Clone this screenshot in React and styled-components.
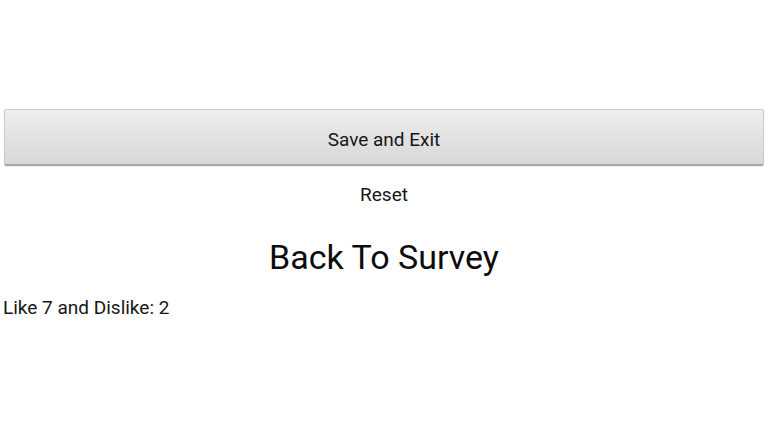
import React from 'react';
import styled, { createGlobalStyle } from 'styled-components';

const GlobalStyle = createGlobalStyle`
  html, body {
    margin: 0;
    padding: 0;
    background: #ffffff;
  }
  body {
    font-family: Roboto, "Noto Sans", sans-serif;
    color: #111111;
  }
`;

const Screen = styled.div`
  width: 768px;
  height: 432px;
  display: flex;
  flex-direction: column;
  padding-top: 109px;
  box-sizing: border-box;
`;

const BigButton = styled.button`
  margin: 0 4px;
  height: 57px;
  border: 1px solid #c9c9c9;
  border-bottom: 2px solid #a9a9a9;
  border-radius: 2px;
  background: linear-gradient(to bottom, #eeeeee 0%, #e2e2e2 50%, #d8d8d8 100%);
  font-family: Roboto, sans-serif;
  font-size: 19px;
  color: #161616;
  padding: 5px 0 0;
  box-shadow: 0 1px 1px rgba(0, 0, 0, 0.08);
`;

const TextButton = styled.div`
  align-self: center;
  margin-top: 17px;
  font-size: 19px;
  line-height: 24px;
  color: #161616;
`;

const Title = styled.div`
  align-self: center;
  margin-top: 29px;
  font-size: 34px;
  line-height: 42px;
  color: #0c0c0c;
`;

const Counts = styled.div`
  margin-top: 18px;
  padding-left: 3px;
  font-size: 19px;
  line-height: 24px;
  color: #161616;
`;

const App = () => (
  <>
    <GlobalStyle />
    <Screen>
      <BigButton>Save and Exit</BigButton>
      <TextButton>Reset</TextButton>
      <Title>Back To Survey</Title>
      <Counts>Like 7 and Dislike: 2</Counts>
    </Screen>
  </>
);

export default App;
